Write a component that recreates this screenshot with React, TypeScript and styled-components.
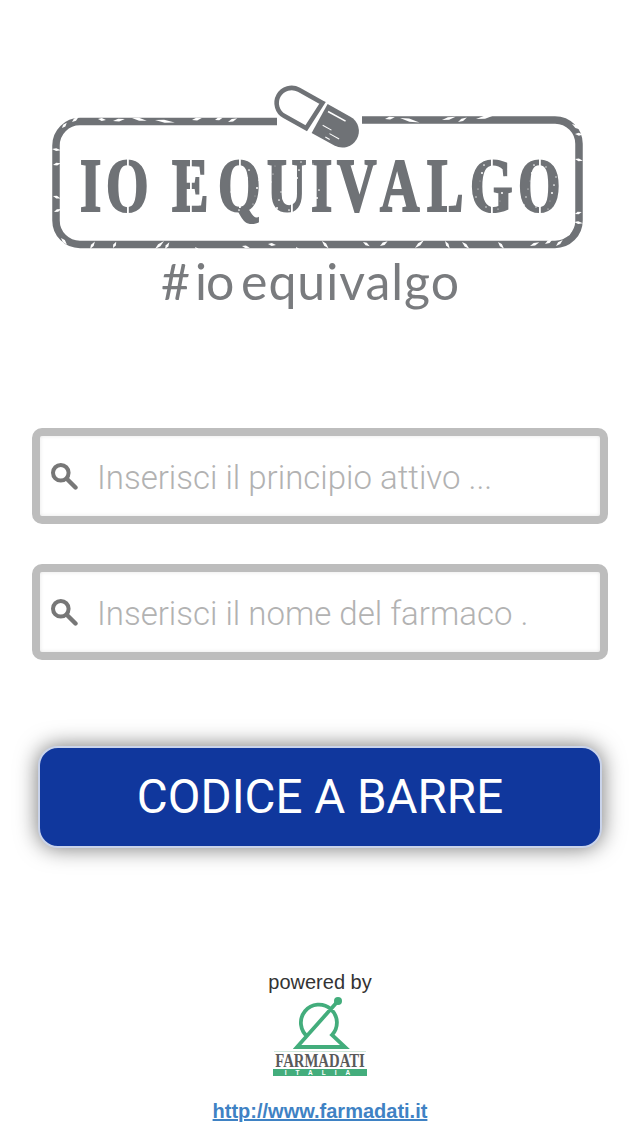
import { createGlobalStyle, styled } from "styled-components";

const GlobalStyle = createGlobalStyle`
  html, body {
    margin: 0;
    padding: 0;
    background: #fff;
  }
`

const Page = styled.div`
  width: 640px;
  height: 1136px;
  display: flex;
  flex-direction: column;
  align-items: center;
  overflow: hidden;
  font-family: "Liberation Sans", Arial, sans-serif;
`

const LogoWrap = styled.div`
  width: 640px;
  height: 428px;
  flex: none;
`

const SearchList = styled.div`
  width: 576px;
  display: flex;
  flex-direction: column;
  gap: 40px;
`

const SearchBox = styled.label`
  height: 96px;
  box-sizing: border-box;
  border: 8px solid #bdbdbd;
  border-radius: 10px;
  display: flex;
  align-items: center;
  padding-left: 11px;
  gap: 19px;
  background: #fff;
  box-shadow: inset 0 0 4px rgba(0, 0, 0, 0.1);
`

const SearchIcon = styled.svg`
  width: 27px;
  height: 27px;
  flex: none;
`

const SearchInput = styled.input`
  flex: 1;
  min-width: 0;
  border: 0;
  outline: 0;
  padding: 3px 0 0;
  background: transparent;
  font-family: Roboto, sans-serif;
  font-weight: 300;
  font-size: 33px;
  color: #333;

  &::placeholder {
    color: #b2b2b2;
    opacity: 1;
  }
`

const BarcodeButton = styled.button`
  width: 564px;
  height: 102px;
  flex: none;
  margin-top: 86px;
  box-sizing: border-box;
  border: 2px solid #c9d3ea;
  border-radius: 20px;
  background: #10379d;
  color: #fff;
  font-family: Roboto, sans-serif;
  font-weight: 400;
  font-size: 47.5px;
  box-shadow: 0 0 22px rgba(0, 0, 0, 0.55);
`

const Footer = styled.div`
  display: flex;
  flex-direction: column;
  align-items: center;
  margin-top: 122px;
`

const PoweredBy = styled.div`
  font-size: 20px;
  line-height: 24px;
  color: #333;
`

const FarmadatiLogo = styled.svg`
  width: 94px;
  height: 82px;
  display: block;
  margin-top: 2px;
`

const SiteLink = styled.a`
  margin-top: 21px;
  font-size: 20px;
  line-height: 24px;
  font-weight: 700;
  color: #3f82c4;
  text-decoration: underline;
`

const GREY = "#6f7276"

// worn cracks on the stamp frame: x, y, length, tilt
const scuffs = [
  [98, 119, 8, 10], [113, 121, 12, -8], [132, 118, 15, 12], [155, 120, 20, 8], [192, 120, 10, -10],
  [215, 120, 8, -15], [228, 122, 10, -20], [385, 119, 10, -8], [400, 118, 20, 14], [442, 120, 14, -12],
  [458, 122, 10, -25], [476, 119, 18, -10], [72, 122, 8, -35], [62, 128, 7, -45],
  [90, 249, 9, -55], [113, 248, 7, -60], [155, 249, 12, -40], [165, 249, 8, -55], [195, 247, 7, 50],
  [242, 246, 8, 15], [268, 244, 8, 10], [296, 247, 6, 60], [322, 241, 10, 50], [363, 242, 8, 35],
  [380, 246, 9, -30], [415, 248, 12, -40], [445, 241, 9, 60], [462, 242, 10, 45], [498, 242, 9, 50],
  [530, 246, 10, -20], [545, 244, 9, -30], [556, 246, 9, -40], [566, 237, 8, -45],
  [52, 149, 9, 10], [53, 165, 8, -10], [53, 196, 8, 20], [54, 212, 8, -20], [61, 238, 9, 50],
  [572, 124, 10, 35], [575, 134, 8, 5], [575, 159, 8, 15], [575, 214, 7, -15], [574, 222, 9, 10],
]

// stencil bridges through the letters: x, y, height
const bridges = [
  [127, 158, 56], [190, 160, 52], [239, 158, 50], [291, 188, 26], [447, 198, 14],
  [491, 158, 12], [491, 200, 14], [539, 158, 56],
]

// small speckle on the letters, repeated from a fixed seed so it stays put
const speckles = Array.from({ length: 90 }, (_, i) => {
  const a = (i * 7919) % 480
  const b = (i * 104729) % 50
  return [80 + a, 161 + b, 0.4 + ((i * 13) % 5) * 0.15]
})

const crackPath = (len: number) => `M0 0l${len * 0.45}-1.6l${len * 0.55} 1.3l${-len * 0.5} 1.6z`

function Logo() {
  return (
    <svg width="640" height="428" viewBox="0 0 640 428" role="img" aria-label="Io equivalgo">
      <path
        d="M277 121.5H80a24 24 0 0 0-24 24v75a24 24 0 0 0 24 24H555a24 24 0 0 0 24-24v-76a24 24 0 0 0-24-24.5H362"
        fill="none"
        stroke={GREY}
        strokeWidth="7.5"
      />
      {scuffs.map(([x, y, len, tilt], i) => (
        <path key={i} d={crackPath(len)} fill="#fff" transform={`translate(${x} ${y}) rotate(${tilt})`} />
      ))}
      <g transform="rotate(29 317 117)">
        <path d="M315 102H288a15 15 0 0 0 0 30H313Z" fill="#fff" stroke={GREY} strokeWidth="4.6" />
        <path d="M320 100.5H346a16.5 16.5 0 0 1 0 33H320Z" fill={GREY} />
        <rect x="324" y="106" width="20" height="1.6" fill="#fff" />
        <rect x="326" y="121" width="10" height="1" fill="#fff" />
        <rect x="336" y="125" width="11" height="1" fill="#fff" />
        <rect x="334" y="130" width="5" height="1" fill="#fff" />
      </g>
      <g transform="scale(0.72 1)" fontFamily="'Liberation Serif', serif" fontWeight="700" fontSize="76" fill={GREY} stroke={GREY} strokeWidth="2.2">
        <text y="211" x={[80, 106].map((x) => x / 0.72).join(" ")}>IO</text>
        <text y="211" x={[172, 218, 267, 311, 337, 380, 427, 470, 518].map((x) => x / 0.72).join(" ")}>EQUIVALGO</text>
      </g>
      {bridges.map(([x, y, h], i) => (
        <rect key={i} x={x} y={y} width="1.8" height={h} fill="#fff" />
      ))}
      {speckles.map(([x, y, r], i) => (
        <circle key={i} cx={x} cy={y} r={r} fill="#fff" />
      ))}
      <g fontFamily="Lato, sans-serif" fontWeight="400" fontSize="50" fill="#797b7e">
        <text x="161 195 206" y="300">#io</text>
        <text x="241" y="300" textLength="218">equivalgo</text>
      </g>
    </svg>
  )
}

function MagnifierIcon() {
  return (
    <SearchIcon viewBox="0 0 27 27">
      <circle cx="9.8" cy="9.8" r="7.8" fill="none" stroke="#777" strokeWidth="4" />
      <path d="M16 16L24.5 24.5" stroke="#777" strokeWidth="4.4" strokeLinecap="round" />
    </SearchIcon>
  )
}

function Farmadati() {
  return (
    <FarmadatiLogo viewBox="0 0 94 82">
      <path d="M65 5L24 51H72L59 39A18 18 0 1 0 35 41" fill="none" stroke="#43ad7c" strokeWidth="3.8" />
      <circle cx="65" cy="5" r="4" fill="#43ad7c" />
      <rect x="1" y="55" width="92" height="1" fill="#cfe6da" />
      <g transform="translate(47 71) scale(0.82 1)">
        <text textAnchor="middle" fontFamily="'Liberation Serif', serif" fontWeight="700" fontSize="18" fill="#5a5a5a">
          FARMADATI
        </text>
      </g>
      <rect y="73" width="94" height="7" fill="#43ad7c" />
      <text x="49" y="79" textAnchor="middle" fontFamily="'Liberation Sans', sans-serif" fontWeight="700" fontSize="6.5" fill="#fff" letterSpacing="9">
        ITALIA
      </text>
    </FarmadatiLogo>
  )
}

export default function App() {
  return (
    <Page>
      <GlobalStyle />
      <LogoWrap>
        <Logo />
      </LogoWrap>
      <SearchList>
        <SearchBox>
          <MagnifierIcon />
          <SearchInput placeholder="Inserisci il principio attivo ..." />
        </SearchBox>
        <SearchBox>
          <MagnifierIcon />
          <SearchInput placeholder="Inserisci il nome del farmaco ." />
        </SearchBox>
      </SearchList>
      <BarcodeButton>CODICE A BARRE</BarcodeButton>
      <Footer>
        <PoweredBy>powered by</PoweredBy>
        <Farmadati />
        <SiteLink href="#">http://www.farmadati.it</SiteLink>
      </Footer>
    </Page>
  )
}
